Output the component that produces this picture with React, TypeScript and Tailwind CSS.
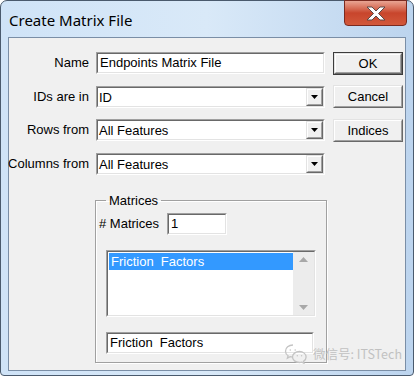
import React from 'react'

const ui = "font-['Liberation_Sans',Arial,sans-serif] text-[13px] text-black"

function Sunken({ className = '', children }: { className?: string; children?: React.ReactNode }) {
  return (
    <div className={`border border-t-[#a0a0a0] border-l-[#a0a0a0] border-b-white border-r-white ${className}`}>
      <div className="h-full border border-t-[#696969] border-l-[#696969] border-b-[#e3e3e3] border-r-[#e3e3e3] bg-white overflow-hidden">
        {children}
      </div>
    </div>
  )
}

function Raised({ className = '', children }: { className?: string; children?: React.ReactNode }) {
  return (
    <div className={`border border-t-[#e3e3e3] border-l-[#e3e3e3] border-b-[#696969] border-r-[#696969] bg-[#f0f0f0] ${className}`}>
      <div className="h-full border border-t-white border-l-white border-b-[#a0a0a0] border-r-[#a0a0a0] flex items-center justify-center">
        {children}
      </div>
    </div>
  )
}

function Combo({ value }: { value: string }) {
  return (
    <Sunken className="w-[229px] h-[22px]">
      <div className="flex h-full items-center">
        <span className="flex-1 pl-[1px] leading-none">{value}</span>
        <Raised className="w-[17px] h-[18px]">
          <svg width="7" height="4" viewBox="0 0 7 4">
            <path d="M0 0h7L3.5 4z" fill="#000" />
          </svg>
        </Raised>
      </div>
    </Sunken>
  )
}

function Row({ label, mt, children }: { label: string; mt: string; children: React.ReactNode }) {
  return (
    <div className={`flex items-center h-[22px] ${mt}`}>
      <div className="w-[80px] flex justify-end whitespace-nowrap">{label}</div>
      <div className="ml-[7px]">{children}</div>
    </div>
  )
}

function Btn({ label, primary, mt }: { label: string; primary?: boolean; mt: string }) {
  if (primary) {
    return (
      <div className={`w-[70px] h-[23px] border border-[#3c3c3c] ${mt}`}>
        <Raised className="h-full">{label}</Raised>
      </div>
    )
  }
  return <Raised className={`w-[70px] h-[23px] ${mt}`}>{label}</Raised>
}

function WeChat() {
  return (
    <svg width="24" height="21" viewBox="0 0 24 21" fill="none" stroke="#c4c4c4" strokeWidth="1.3">
      <path d="M9 2C4.6 2 1.5 4.8 1.5 8.2c0 1.9 1 3.5 2.6 4.6l-.7 2.3 2.7-1.4c.9.3 1.9.4 2.9.4" />
      <circle cx="6.3" cy="7" r=".8" fill="#c4c4c4" stroke="none" />
      <circle cx="11.2" cy="7" r=".8" fill="#c4c4c4" stroke="none" />
      <path d="M15.5 8.5c-4 0-7 2.5-7 5.5s3 5.5 7 5.5c.8 0 1.6-.1 2.3-.3l2.2 1.1-.5-1.9c1.6-1 2.6-2.6 2.6-4.4 0-3-3-5.5-6.6-5.5z" />
      <circle cx="13.3" cy="12.8" r=".7" fill="#c4c4c4" stroke="none" />
      <circle cx="17.6" cy="12.8" r=".7" fill="#c4c4c4" stroke="none" />
    </svg>
  )
}

export default function App() {
  return (
    <div className="w-[415px] h-[377px] overflow-hidden bg-white">
      <div className="relative w-[414px] h-[376px] rounded-t-[7px] rounded-b-[4px] border border-[#4a5a6d] bg-gradient-to-r from-[#cfe3f7] via-[#d9e9f8] to-[#bcd4ee] flex flex-col">
        {/* Title bar */}
        <div className="h-[36px] flex items-start shrink-0">
          <div className="pl-[8px] pt-[9px] font-['Noto_Sans',sans-serif] text-[15px] leading-[20px] text-black">
            Create Matrix File
          </div>
          <div className="ml-auto mr-[6px] w-[63px] h-[26px] -mt-px rounded-b-[4px] border border-[#7a2a20] bg-gradient-to-b from-[#e8a493] via-[#c8452c] to-[#d2583b] flex items-center justify-center">
            <svg width="22" height="15" viewBox="0 0 22 15">
              <path
                d="M2 1h5l4 4 4-4h5l-6.5 6.5L20 14h-5l-4-4-4 4H2l6.5-6.5z"
                fill="#fff"
                stroke="#5a4a48"
                strokeWidth="1"
                strokeLinejoin="round"
              />
            </svg>
          </div>
        </div>

        {/* Client area */}
        <div className={`mx-[7px] h-[334px] border border-[#7a8ea6] bg-[#f0f0f0] ${ui}`}>
          <div className="pt-[14px] flex">
            <div className="w-[316px]">
              <Row label="Name" mt="">
                <Sunken className="w-[229px] h-[22px]">
                  <div className="pl-[2px] h-full flex items-center">Endpoints Matrix File</div>
                </Sunken>
              </Row>
              <Row label="IDs are in" mt="mt-[12px]">
                <Combo value="ID" />
              </Row>
              <Row label="Rows from" mt="mt-[11px]">
                <Combo value="All Features" />
              </Row>
              <Row label="Columns from" mt="mt-[12px]">
                <Combo value="All Features" />
              </Row>
            </div>
            <div className="ml-[8px]">
              <Btn label="OK" primary mt="" />
              <Btn label="Cancel" mt="mt-[10px]" />
              <Btn label="Indices" mt="mt-[11px]" />
            </div>
          </div>

          <fieldset className="ml-[86px] mt-[18px] w-[230px] border border-[#a0a0a0] pl-[3px] pr-[10px] pb-[8px] shadow-[inset_1px_1px_0_#fff,1px_1px_0_#fff]">
            <legend className="ml-[7px] px-[3px] leading-[15px]">Matrices</legend>
            <div className="flex items-center pt-[5px]">
              <span className="whitespace-nowrap"># Matrices</span>
              <Sunken className="ml-[8px] w-[60px] h-[22px]">
                <div className="pl-[2px] h-full flex items-center">1</div>
              </Sunken>
            </div>
            <Sunken className="ml-[7px] mt-[15px] w-[210px] h-[67px]">
              <div className="flex h-full">
                <div className="flex-1 pt-px pl-px">
                  <div className="h-[17px] bg-[#3399ff] text-white pl-[2px] flex items-center whitespace-pre">Friction  Factors</div>
                </div>
                <div className="w-[21px] h-full bg-[#ececec] flex flex-col items-center justify-between py-[5px]">
                  <svg width="9" height="5" viewBox="0 0 9 5">
                    <path d="M4.5 0L9 5H0z" fill="#a8a8a8" />
                  </svg>
                  <svg width="9" height="5" viewBox="0 0 9 5">
                    <path d="M0 0h9L4.5 5z" fill="#a8a8a8" />
                  </svg>
                </div>
              </div>
            </Sunken>
            <Sunken className="ml-[7px] mt-[15px] w-[208px] h-[22px]">
              <div className="pl-[2px] h-full flex items-center whitespace-pre">Friction  Factors</div>
            </Sunken>
          </fieldset>
        </div>

        {/* watermark */}
        <div className="absolute left-[283px] top-[342px] flex items-center gap-[5px] whitespace-nowrap pointer-events-none">
          <WeChat />
          <span className="font-['Noto_Sans_CJK_SC','Noto_Sans',sans-serif] text-[12.5px] leading-[18px] text-[#bdbdbd] opacity-90">微信号: ITSTech</span>
        </div>
      </div>
    </div>
  )
}
